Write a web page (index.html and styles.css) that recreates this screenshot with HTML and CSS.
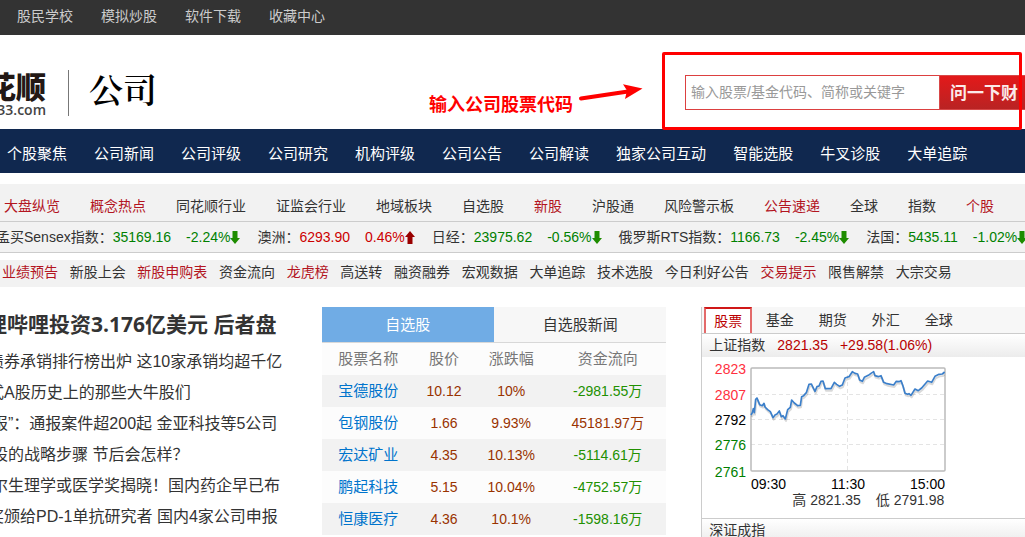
FILE: index.html
```html
<!DOCTYPE html>
<html lang="zh-CN">
<head>
<meta charset="utf-8">
<meta name="viewport" content="width=device-width, initial-scale=1">
<title>公司</title>
<link rel="stylesheet" href="styles.css">
</head>
<body>
<nav class="topbar">
  <a href="#">股民学校</a><a href="#">模拟炒股</a><a href="#">软件下载</a><a href="#">收藏中心</a>
</nav>

<header class="header">
  <a class="logo" href="#">
    <span class="logo-name">花顺</span>
    <span class="logo-site">33.com</span>
  </a>
  <h1 class="channel">公司</h1>
  <form class="search">
    <input class="search-input" type="text" aria-label="股票搜索" placeholder="输入股票/基金代码、简称或关键字">
    <button class="search-button" type="button">问一下财</button>
    <div class="callout">
      <span class="callout-text">输入公司股票代码</span>
      <svg class="callout-arrow" width="66" height="20" viewBox="0 0 66 20" aria-hidden="true">
        <path d="M3 15.500L50 8.500" stroke="#f00" stroke-width="4" stroke-linecap="round"/>
        <path d="M64.500 5.500L45 1.200L49 7.500L47 16Z" fill="#f00"/>
      </svg>
    </div>
    <div class="frame"></div>
  </form>
</header>

<nav class="mainnav">
  <a href="#">个股聚焦</a><a href="#">公司新闻</a><a href="#">公司评级</a><a href="#">公司研究</a><a href="#">机构评级</a><a href="#">公司公告</a><a href="#">公司解读</a><a href="#">独家公司互动</a><a href="#">智能选股</a><a href="#">牛叉诊股</a><a href="#">大单追踪</a>
</nav>

<nav class="subnav">
  <a class="hot" href="#">大盘纵览</a><a class="hot" href="#">概念热点</a><a href="#">同花顺行业</a><a href="#">证监会行业</a><a href="#">地域板块</a><a href="#">自选股</a><a class="hot" href="#">新股</a><a href="#">沪股通</a><a href="#">风险警示板</a><a class="hot" href="#">公告速递</a><a href="#">全球</a><a href="#">指数</a><a class="hot" href="#">个股</a>
</nav>

<div class="ticker">
  <div class="quote down">
    <span class="quote-name">孟买Sensex指数：</span><span class="quote-value">35169.16</span><span>-2.24%</span>
    <svg width="10" height="13" viewBox="0 0 10 13" aria-hidden="true"><path d="M2.500 0h5v7H10L5 13L0 7h2.500z" fill="#1e8c00"/></svg>
  </div>
  <div class="quote up">
    <span class="quote-name">澳洲：</span><span class="quote-value">6293.90</span><span>0.46%</span>
    <svg width="10" height="13" viewBox="0 0 10 13" aria-hidden="true"><path d="M2.500 13h5V6H10L5 0L0 6h2.500z" fill="#900"/></svg>
  </div>
  <div class="quote down">
    <span class="quote-name">日经：</span><span class="quote-value">23975.62</span><span>-0.56%</span>
    <svg width="10" height="13" viewBox="0 0 10 13" aria-hidden="true"><path d="M2.500 0h5v7H10L5 13L0 7h2.500z" fill="#1e8c00"/></svg>
  </div>
  <div class="quote down">
    <span class="quote-name">俄罗斯RTS指数：</span><span class="quote-value">1166.73</span><span>-2.45%</span>
    <svg width="10" height="13" viewBox="0 0 10 13" aria-hidden="true"><path d="M2.500 0h5v7H10L5 13L0 7h2.500z" fill="#1e8c00"/></svg>
  </div>
  <div class="quote down">
    <span class="quote-name">法国：</span><span class="quote-value">5435.11</span><span>-1.02%</span>
    <svg width="10" height="13" viewBox="0 0 10 13" aria-hidden="true"><path d="M2.500 0h5v7H10L5 13L0 7h2.500z" fill="#1e8c00"/></svg>
  </div>
</div>

<nav class="topics">
  <a class="hot" href="#">业绩预告</a>&nbsp;&nbsp;
  <a href="#">新股上会</a>&nbsp;&nbsp;
  <a class="hot" href="#">新股申购表</a>&nbsp;&nbsp;
  <a href="#">资金流向</a>&nbsp;&nbsp;
  <a class="hot" href="#">龙虎榜</a>&nbsp;&nbsp;
  <a href="#">高送转</a>&nbsp;&nbsp;
  <a href="#">融资融券</a>&nbsp;&nbsp;
  <a href="#">宏观数据</a>&nbsp;&nbsp;
  <a href="#">大单追踪</a>&nbsp;&nbsp;
  <a href="#">技术选股</a>&nbsp;&nbsp;
  <a href="#">今日利好公告</a>&nbsp;&nbsp;
  <a class="hot" href="#">交易提示</a>&nbsp;&nbsp;
  <a href="#">限售解禁</a>&nbsp;&nbsp;
  <a href="#">大宗交易</a>
</nav>

<main class="content">
  <section class="news">
    <h2 class="headline"><a href="#">哩哔哩投资3.176亿美元 后者盘</a></h2>
    <ul class="news-list">
      <li class="far"><a href="#">债券承销排行榜出炉 这10家承销均超千亿</a></li>
      <li class="far"><a href="#">式A股历史上的那些大牛股们</a></li>
      <li><a href="#">报”：通报案件超200起 金亚科技等5公司</a></li>
      <li><a href="#">股的战略步骤 节后会怎样？</a></li>
      <li><a href="#">尔生理学或医学奖揭晓！国内药企早已布</a></li>
      <li class="far"><a href="#">奖颁给PD-1单抗研究者 国内4家公司申报</a></li>
    </ul>
  </section>

  <section class="watch">
    <div class="watch-tabs">
      <button class="watch-tab active" type="button">自选股</button>
      <button class="watch-tab" type="button">自选股新闻</button>
    </div>
    <table class="stocks">
      <thead>
        <tr><th class="col-name">股票名称</th><th class="col-price">股价</th><th class="col-change">涨跌幅</th><th class="col-flow">资金流向</th></tr>
      </thead>
      <tbody>
        <tr><td><a href="#">宝德股份</a></td><td>10.12</td><td>10%</td><td class="out">-2981.55万</td></tr>
        <tr><td><a href="#">包钢股份</a></td><td>1.66</td><td>9.93%</td><td>45181.97万</td></tr>
        <tr><td><a href="#">宏达矿业</a></td><td>4.35</td><td>10.13%</td><td class="out">-5114.61万</td></tr>
        <tr><td><a href="#">鹏起科技</a></td><td>5.15</td><td>10.04%</td><td class="out">-4752.57万</td></tr>
        <tr><td><a href="#">恒康医疗</a></td><td>4.36</td><td>10.1%</td><td class="out">-1598.16万</td></tr>
      </tbody>
    </table>
  </section>

  <section class="market">
    <div class="market-tabs">
      <button class="market-tab active" type="button">股票</button>
      <button class="market-tab" type="button">基金</button>
      <button class="market-tab" type="button">期货</button>
      <button class="market-tab" type="button">外汇</button>
      <button class="market-tab" type="button">全球</button>
    </div>
    <div class="index-row"><a href="#">上证指数</a><span>2821.35</span><span>+29.58(1.06%)</span></div>
    <svg class="chart" width="250" height="136" viewBox="0 0 250 136" role="img" aria-label="上证指数分时走势">
      <g stroke="#e4e4e4" stroke-dasharray="4 3">
        <path d="M49 37.500H243M49 62.500H243M49 87.500H243M145.500 11V113" fill="none"/>
      </g>
      <rect x="49" y="11" width="194" height="103" rx="1" fill="none" stroke="#bbb" stroke-width="1.500"/>
      <g transform="translate(43 3) scale(.3333)" fill="none" stroke-linejoin="round">
        <path class="trend-shadow" transform="translate(2 6)" d="M18 165L22 158L25 146L28 158L32 118L36 114L40 124L44 134L52 137L57 130L60 141L68 149L76 155L84 173L90 165L96 162L103 153L109 170L114 167L121 177L128 149L136 142L140 120L148 129L158 137L166 136L170 110L176 107L184 98L192 73L199 72L204 82L210 94L216 80L222 78L228 64L234 63L241 86L258 86L268 67L275 73L284 79L292 75L300 54L312 50L322 35L330 40L338 42L344 60L352 64L358 52L370 46L378 40L386 35L390 47L400 50L408 47L416 67L426 71L446 75L454 64L462 65L468 62L474 78L480 100L488 103L492 101L498 106L510 87L520 92L530 84L548 63L560 67L570 49L582 43L592 42L596 38"/>
        <path class="trend" d="M18 165L22 158L25 146L28 158L32 118L36 114L40 124L44 134L52 137L57 130L60 141L68 149L76 155L84 173L90 165L96 162L103 153L109 170L114 167L121 177L128 149L136 142L140 120L148 129L158 137L166 136L170 110L176 107L184 98L192 73L199 72L204 82L210 94L216 80L222 78L228 64L234 63L241 86L258 86L268 67L275 73L284 79L292 75L300 54L312 50L322 35L330 40L338 42L344 60L352 64L358 52L370 46L378 40L386 35L390 47L400 50L408 47L416 67L426 71L446 75L454 64L462 65L468 62L474 78L480 100L488 103L492 101L498 106L510 87L520 92L530 84L548 63L560 67L570 49L582 43L592 42L599 36"/>
      </g>
      <g text-anchor="end">
        <text class="rise" x="44" y="17">2823</text>
        <text class="rise" x="44" y="43">2807</text>
        <text x="44" y="68">2792</text>
        <text class="fall" x="44" y="93">2776</text>
        <text class="fall" x="44" y="120">2761</text>
        <text x="243" y="132">15:00</text>
      </g>
      <text x="49" y="132">09:30</text>
      <text x="146" y="132" text-anchor="middle">11:30</text>
    </svg>
    <div class="range"><span>高 2821.35</span><span>低 2791.98</span></div>
    <div class="index-row next"><a href="#">深证成指</a></div>
  </section>
</main>
</body>
</html>
```
FILE: styles.css
```css
* {
  box-sizing: border-box;
}

body {
  margin: 0;
  background: #fff;
  color: #333;
  font: 14px/20px "Liberation Sans", "Noto Sans CJK SC", sans-serif;
  white-space: nowrap;
  overflow: hidden;
}

a {
  color: inherit;
  text-decoration: none;
}

button {
  margin: 0;
  padding: 0;
  border: 0;
  background: none;
  color: inherit;
  font: inherit;
}

.hot {
  color: #b3151f;
}

.topbar {
  display: flex;
  gap: 28px;
  padding-left: 17px;
  background: #333;
  color: #ccc;
  line-height: 32px;
  padding-bottom: 3px;
}

.header {
  display: flex;
  align-items: flex-start;
  height: 94px;
  padding-top: 35px;
}

.logo {
  display: flex;
  flex-direction: column;
  align-items: flex-end;
  width: 69px;
  height: 46px;
  padding-right: 22px;
  border-right: 1px solid #777;
  color: #231815;
}

.logo-name {
  font: 900 30px/30px "Noto Sans CJK SC", sans-serif;
}

.logo-site {
  color: #444;
  font: 600 14px/20px "Open Sans", sans-serif;
}

.channel {
  margin: 0;
  padding-left: 20px;
  color: #000;
  font: 600 34px/38px "Noto Serif CJK SC", "Noto Sans CJK SC", serif;
}

.search {
  position: relative;
  display: flex;
  width: 340px;
  height: 35px;
  margin: 5px 0 0 auto;
}

.search-input {
  flex: 1;
  min-width: 0;
  padding: 0 5px 2px;
  border: 1px solid #dc4040;
  border-right: 0;
  background: #fff;
  color: #333;
  font: inherit;
}

.search-input::placeholder {
  color: #999;
  opacity: 1;
}

.search-button {
  width: 86px;
  padding: 0 0 2px 10px;
  border: 1px solid #d84848;
  border-right: 0;
  background: linear-gradient(#e3191a, #b92323);
  color: #fbeaea;
  font: bold 17px/31px "Noto Sans CJK SC", sans-serif;
  text-align: left;
}

.frame {
  position: absolute;
  inset: -23px 3px -20px -23px;
  border: 3px solid #f00;
  border-radius: 2px;
}

.callout {
  position: absolute;
  right: 381px;
  top: 8px;
  display: flex;
  gap: 5px;
}

.callout-text {
  padding-top: 6px;
  color: #f00;
  font: bold 18px/28px "Noto Sans CJK SC", sans-serif;
}

.mainnav {
  display: flex;
  gap: 27px;
  padding-left: 7px;
  background: #10284f;
  color: #fff;
  font-size: 15px;
  line-height: 44px;
  padding-top: 3px;
  height: 44px;
}

.subnav {
  display: flex;
  gap: 30px;
  margin-top: 11px;
  padding: 7px 0 0 4px;
  border-bottom: 1px solid #ccc;
  background: #f2f2f2;
  line-height: 30px;
}

.ticker {
  display: flex;
  gap: 17px;
  border-bottom: 1px solid #ccc;
  background: #f2f2f2;
  line-height: 30px;
}

.quote {
  display: flex;
  align-items: center;
  flex: none;
}

.quote:first-child {
  margin-left: -4px;
}

.quote-name {
  color: #333;
}

.quote-value {
  padding-right: 15px;
}

.down {
  color: #008000;
}

.up {
  color: #c00;
}

.topics {
  margin-top: 7px;
  padding: 0 0 2px 2px;
  background: #f2f2f2;
  line-height: 25px;
}

.content {
  display: grid;
  grid-template-columns: 287fr 345fr 324fr;
  column-gap: 35px;
  padding-top: 20px;
}

.news {
  min-width: 0;
}

.headline {
  margin: 0 0 0 -14px;
  padding-bottom: 5px;
  color: #333;
  font: bold 21px/34px "Open Sans", "Noto Sans CJK SC", sans-serif;
}

.news-list {
  margin: 0;
  padding: 0;
  list-style: none;
  font-size: 16px;
  line-height: 31px;
}

.news-list li {
  margin-left: -8px;
}

.news-list .far {
  margin-left: -12px;
}

.watch-tabs {
  display: flex;
  border-bottom: 1px solid #d8d8d8;
  background: #f7f7f7;
}

.watch-tab {
  flex: 1;
  font-size: 15px;
  line-height: 35px;
}

.watch-tab.active {
  background: #70ace5;
  color: #fff;
}

.stocks {
  width: 100%;
  border-collapse: collapse;
  table-layout: fixed;
  background: #fcfcfc;
  color: #930;
  text-align: center;
}

.stocks th,
.stocks td {
  height: 32px;
  padding: 0;
}

.stocks th {
  color: #777;
  font-size: 15px;
  font-weight: 400;
}

.stocks a {
  color: #0074cc;
  font-size: 15px;
}

.stocks tbody tr:nth-child(odd) {
  background: #f2f2f2;
}

.stocks .out {
  color: #219000;
}

.col-name {
  width: 27%;
}

.col-price {
  width: 17%;
}

.col-change {
  width: 22%;
}

.market {
  min-width: 0;
  border-left: 1px solid #ccc;
}

.market-tabs {
  display: flex;
  padding-left: 2px;
  border-bottom: 1px solid #ccc;
  background: #f7f7f7;
}

.market-tab {
  width: 53px;
  line-height: 26px;
}

.market-tab.active {
  width: 48px;
  border: 2px solid #e36a6a;
  border-top-color: #d01818;
  border-bottom: 0;
  margin-right: 1px;
  background: #fff;
  color: #b00;
  line-height: 24px;
}

.index-row {
  display: flex;
  gap: 12px;
  padding-left: 7px;
  background: linear-gradient(#fff, #ececec);
  line-height: 23px;
}

.index-row span {
  color: #b80000;
}

.chart {
  display: block;
  font-size: 14px;
}

.chart .rise {
  fill: #ff3040;
}

.chart .fall {
  fill: #008000;
}

.trend {
  stroke: #3b7fca;
  stroke-width: 5;
}

.trend-shadow {
  stroke: #000;
  stroke-opacity: .15;
  stroke-width: 6;
}

.range {
  display: flex;
  justify-content: flex-end;
  gap: 15px;
  width: 242px;
  line-height: 15px;
}

.next {
  margin-top: 10px;
  border-top: 1px solid #ccc;
}
```
